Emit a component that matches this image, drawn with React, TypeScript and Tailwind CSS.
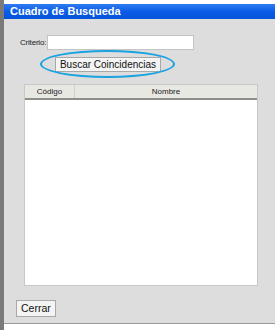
import React, { useState } from "react";

const App: React.FC = () => {
  const [criterio, setCriterio] = useState<string>("");

  return (
    <div
      className="w-[279px] h-[330px] bg-white flex"
      style={{ fontFamily: "'Liberation Sans', Arial, sans-serif" }}
    >
      {/* fondo de la pagina detras del dialogo */}
      <div className="w-[4px] h-full bg-[#7a7a7a]" />
      <div className="w-[271px] pt-[4px] flex flex-col">
        <div className="h-[15px] bg-gradient-to-b from-[#2f7cf0] via-[#0a5ce6] to-[#0653d8] text-white font-bold text-[11px] leading-[15px] pl-[6px]">
          Cuadro de Busqueda
        </div>
        <div className="h-[305px] bg-[#dddddd] border-b border-[#9a9a9a] flex flex-col">
          <div className="flex items-center mt-[16px] pl-[16px] h-[15px]">
            <span className="text-[8px] leading-[10px] text-[#222] mr-[1px] tracking-[-0.2px]">Criterio:</span>
            <input
              value={criterio}
              onChange={(e) => setCriterio(e.target.value)}
              className="w-[147px] h-[15px] bg-white border border-[#c4c4c4] outline-none text-[9px] px-1"
            />
          </div>
          <div className="relative flex ml-[51px] mt-[7px] w-[106px]">
            <button className="w-[106px] h-[15px] bg-[#f4f4f4] border border-[#a8a8a8] text-[10px] leading-[13px] text-[#111] whitespace-nowrap">
              Buscar Coincidencias
            </button>
            <div className="absolute left-[-15px] top-[-7px] w-[135px] h-[28px] rounded-[50%] border-2 border-[#1aa3e0] pointer-events-none" />
          </div>
          <div className="ml-[20px] mt-[12px] w-[234px] h-[202px] bg-white border border-[#c8c8c8] flex flex-col">
            <div className="flex h-[15px] bg-[#e8e8e2] border-b-2 border-[#8e8e88] text-[8px] text-[#222] leading-[13px]">
              <div className="w-[50px] text-center border-r border-[#cfcfc8]">Código</div>
              <div className="flex-1 text-center">Nombre</div>
            </div>
          </div>
          <div className="flex ml-[12px] mt-[14px]">
            <button className="h-[17px] px-[4px] bg-[#f4f4f4] border border-[#a8a8a8] text-[10.5px] leading-[15px] text-[#111]">
              Cerrar
            </button>
          </div>
        </div>
      </div>
    </div>
  );
};

export default App;
